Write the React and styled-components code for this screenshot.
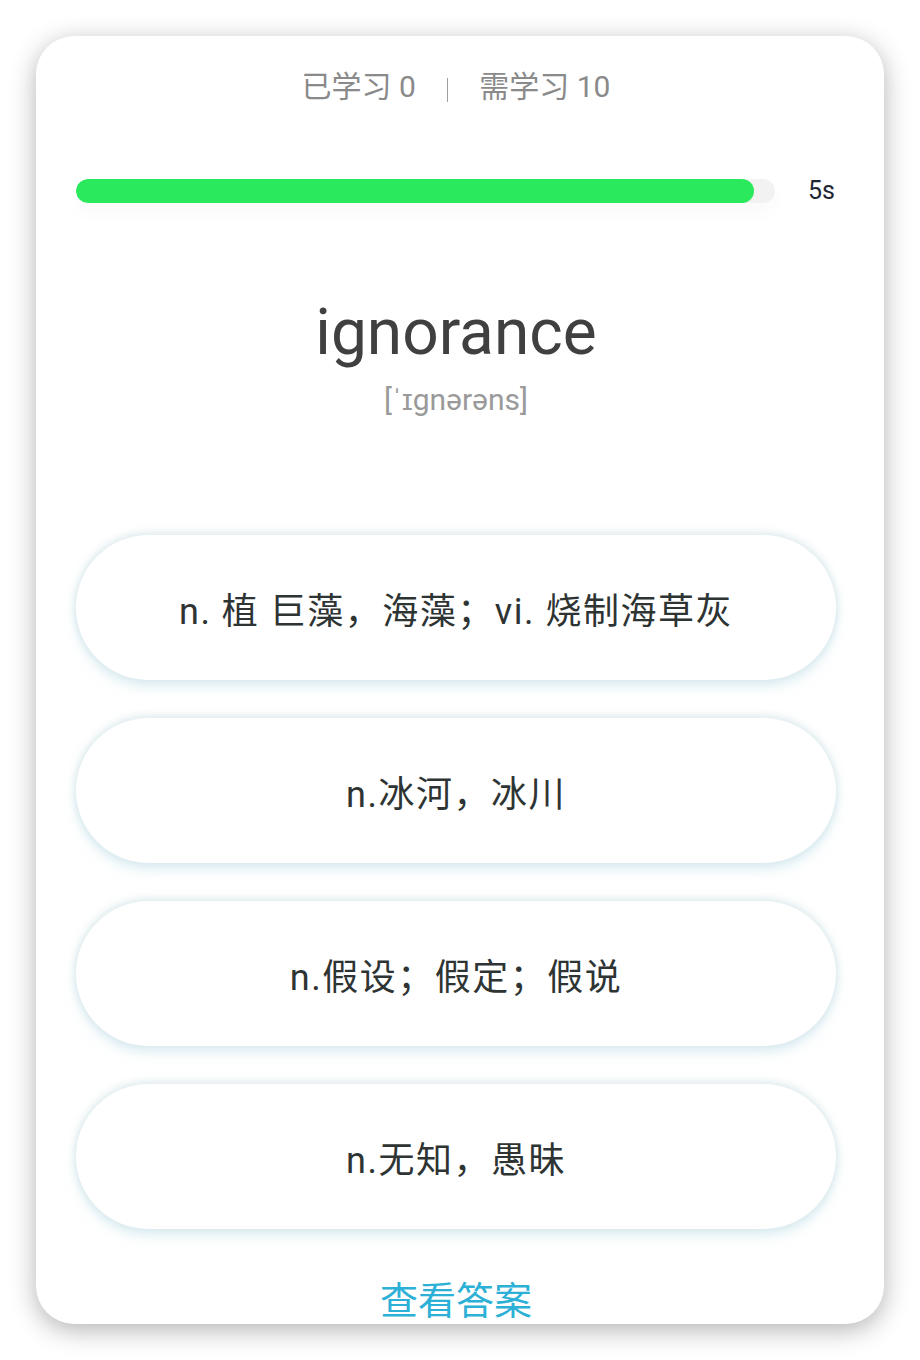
import React from 'react';
import styled, { createGlobalStyle } from 'styled-components';

const options = [
  'n. 植 巨藻，海藻；vi. 烧制海草灰',
  'n.冰河，冰川',
  'n.假设；假定；假说',
  'n.无知，愚昧',
];

const GlobalStyle = createGlobalStyle`
  html, body {
    margin: 0;
    background: #ffffff;
    font-family: Roboto, "Noto Sans CJK SC", sans-serif;
  }
`;

const Page = styled.div`
  padding: 36px;
`;

const Card = styled.div`
  box-sizing: border-box;
  width: 848px;
  height: 1288px;
  background: #fff;
  border-radius: 38px;
  box-shadow: 0 6px 26px rgba(0, 0, 0, 0.3);
  overflow: hidden;
  display: flex;
  flex-flow: column nowrap;
  padding: 30px 48px 0 40px;
`;

const Stats = styled.div`
  display: flex;
  justify-content: center;
  align-items: center;
  gap: 31px;
  font-size: 30px;
  line-height: 42px;
  color: #8a8a8a;
`;

const Divider = styled.span`
  display: block;
  width: 1.5px;
  height: 24px;
  background: #a0a0a0;
  margin-top: 6px;
`;

const TimerRow = styled.div`
  display: flex;
  align-items: center;
  margin-top: 68px;
  gap: 33px;
`;

const Track = styled.div`
  flex: 1;
  height: 24px;
  border-radius: 12px;
  background: #f2f2f2;
  box-shadow: 0 10px 18px rgba(0, 0, 0, 0.025);
  overflow: hidden;
`;

const Fill = styled.div`
  height: 100%;
  border-radius: 12px;
  background: #2be95c;
`;

const Seconds = styled.span`
  font-size: 25px;
  color: #1e2633;
  width: 28px;
`;

const Word = styled.h1`
  margin: 92px 0 0;
  text-align: center;
  font-weight: 400;
  font-size: 64px;
  line-height: 72px;
  color: #404040;
`;

const Phonetic = styled.div`
  margin-top: 11px;
  text-align: center;
  font-size: 30px;
  line-height: 40px;
  color: #9a9a9a;
`;

const Options = styled.div`
  display: flex;
  flex-flow: column nowrap;
  gap: 38px;
  margin-top: 115px;
`;

const Option = styled.button`
  height: 145px;
  border: none;
  border-radius: 73px;
  background: #fff;
  font-family: Roboto, "Noto Sans CJK SC", sans-serif;
  font-size: 36px;
  letter-spacing: 1.5px;
  color: #2e3433;
  box-shadow: 0 0 7px rgba(210, 228, 233, 0.7), 0 7px 12px rgba(195, 226, 234, 0.5),
    0 -4px 8px rgba(232, 238, 240, 0.6);
  cursor: pointer;
`;

const Answer = styled.div`
  margin-top: 50px;
  text-align: center;
  font-size: 38px;
  line-height: 38px;
  color: #2cb0d6;
  font-family: "Noto Sans CJK SC", sans-serif;
`;

export default function App() {
  return (
    <Page>
      <GlobalStyle />
      <Card>
        <Stats>
          <span>已学习 0</span>
          <Divider />
          <span>需学习 10</span>
        </Stats>
        <TimerRow>
          <Track>
            <Fill style={{ width: '97%' }} />
          </Track>
          <Seconds>5s</Seconds>
        </TimerRow>
        <Word>ignorance</Word>
        <Phonetic>[ˈɪgnərəns]</Phonetic>
        <Options>
          {options.map(text => (
            <Option key={text}>{text}</Option>
          ))}
        </Options>
        <Answer>查看答案</Answer>
      </Card>
    </Page>
  );
}
